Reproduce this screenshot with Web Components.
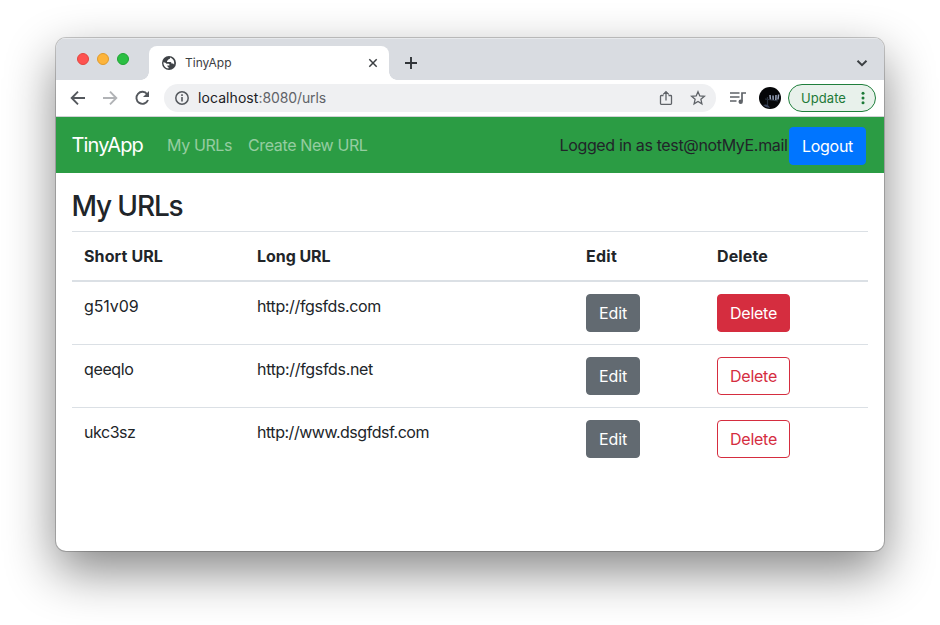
<!DOCTYPE html>
<html lang="en">
<head>
<meta charset="utf-8">
<title>TinyApp</title>
<style>
html,body{margin:0;height:100%;background:#fff;overflow:hidden}
body{font-family:Inter,"Liberation Sans",sans-serif;color:#212529;font-size:16px}
</style>
</head>
<body>
<browser-window>
  <tab-strip slot="chrome" label="TinyApp"></tab-strip>
  <tool-bar slot="chrome"></tool-bar>
  <nav-bar></nav-bar>
  <url-page></url-page>
</browser-window>
<script>
const define = (name, html, setup) => customElements.define(name, class extends HTMLElement {
  connectedCallback() {
    if (this.shadowRoot) return;
    const t = document.createElement('template');
    t.innerHTML = html;
    this.attachShadow({mode: 'open'}).append(t.content.cloneNode(true));
    if (setup) setup(this);
  }
});

/* A single line of text whose tracking is set so that it fills the width in "w". */
define('text-run', `<style>:host{display:inline-block;white-space:nowrap}span{display:inline-block}</style><span><slot></slot></span>`, el => {
  const w = parseFloat(el.getAttribute('w'));
  const n = el.textContent.length;
  const natural = el.shadowRoot.querySelector('span').getBoundingClientRect().width;
  el.style.letterSpacing = ((w - natural) / n).toFixed(3) + 'px';
});

define('app-button', `<style>
:host{display:inline-block}
button{font:inherit;display:block;box-sizing:border-box;height:38px;padding:0 12px;line-height:24px;border:1px solid #626a71;border-radius:4px;background:#626a71;color:#fff}
:host([kind=primary]) button{background:#0075ff;border-color:#0075ff}
:host([kind=danger]) button{background:#d52d3f;border-color:#d52d3f}
:host([kind=outline]) button{background:#fff;border-color:#d52d3f;color:#d52d3f}
</style><button><slot></slot></button>`);

define('browser-window', `<style>
:host{display:block;padding:38px 56px 74px;height:625px;box-sizing:border-box}
.frame{height:513px;background:#fff;border-radius:10px;box-shadow:0 0 0 1px rgba(0,0,0,.2),0 20px 50px rgba(0,0,0,.48)}
.clip{height:513px;border-radius:10px;overflow:hidden}
</style><div class="frame"><div class="clip"><slot name="chrome"></slot><slot></slot></div></div>`);

define('tab-strip', `<style>
:host{display:flex;height:42px;box-sizing:border-box;background:#d9dce1;padding:0 16px 0 21px;color:#3c4043;box-shadow:inset 0 1px #e7e9ec}
.lights{display:flex;gap:8px;padding-top:15px;width:72px}
.lights i{width:12px;height:12px;box-sizing:border-box;border-radius:50%;border:1px solid #e2463f;background:#fe5250}
.lights i:nth-child(2){background:#fdb43b;border-color:#e09b2b}
.lights i:nth-child(3){background:#2bbf43;border-color:#20a534}
.tab{position:relative;display:flex;align-items:center;width:240px;height:34px;margin-top:8px;box-sizing:border-box;padding:0 11px 0 13px;background:#fff;border-radius:8px 8px 0 0;font-size:12px}
.tab::before,.tab::after{content:"";position:absolute;bottom:0;width:8px;height:8px}
.tab::before{left:-8px;background:radial-gradient(circle at 0 0,transparent 7.5px,#fff 8px)}
.tab::after{right:-8px;background:radial-gradient(circle at 100% 0,transparent 7.5px,#fff 8px)}
.tab text-run{margin-left:9px;flex:1;padding-bottom:2px}
svg{display:block;flex:none}
.plus{margin:18px 0 0 15px}.down{margin:19px 0 0 auto}
</style>
<div class="lights"><i></i><i></i><i></i></div>
<div class="tab">
<svg width="14" height="14" viewBox="0 0 14 14"><circle cx="7" cy="7" r="7" fill="#3f4347"/><path d="M8 1.5c.2 1-.3 1.6-1.2 1.8-.9.1-.7 1.2-1.500 1.400-.7.3-.3 1.300.4 1.300h2.800c.8 0 1 .9.9 1.600h1c.8 0 1.300.6 1.700.9.6-2.800-.6-5.900-4.100-7zM1.400 6.300c-.2 3.300 2 6 5.100 6.300v-1.500c-.8-.1-1.200-.7-1.200-1.600h2c.5-.6.2-1.700-.7-1.700H4.500c-.6-.6-1.200-1.300-3.100-1.500z" fill="#fff"/></svg>
<text-run w="46.5">TinyApp</text-run>
<svg width="10" height="10" viewBox="0 0 10 10" stroke="#3c4043" stroke-width="1.5"><path d="M1.3 1.3l7.4 7.4M8.7 1.3L1.3 8.7"/></svg>
</div>
<svg class="plus" width="14" height="14" viewBox="0 0 14 14" stroke="#303438" stroke-width="1.9"><path d="M7 1v12M1 7h12"/></svg>
<svg class="down" width="12" height="12" viewBox="0 0 12 12" fill="none" stroke="#3c4043" stroke-width="2"><path d="M1.5 3.7L6 8.2l4.500-4.500"/></svg>`,
el => el.shadowRoot.querySelector('text-run').textContent = el.getAttribute('label'));

define('tool-bar', `<style>
:host{display:flex;align-items:center;box-sizing:border-box;height:37px;background:#fff;border-bottom:1px solid #d0d2d5;padding:0 8px 0 14px;color:#202124;font-size:14px}
svg{display:block;flex:none}
.box{display:flex;flex:none;align-items:center;width:552px;height:28px;border-radius:14px;background:#eff0f2;box-sizing:border-box;padding:0 10px 0 10px;margin-left:13px}
.box text-run{padding-bottom:2px}
.path{color:#5f6368;flex:1}
.avatar{margin:0 7px 0 13px}
.update{display:flex;align-items:center;justify-content:space-between;width:88px;height:28px;box-sizing:border-box;border:1px solid #1f7f3c;border-radius:14px;background:#e8f1eb;color:#1d7a38;padding:0 10.5px 0 12px;font-size:13px}
</style>
<svg width="16" height="16" viewBox="0 0 16 16" fill="none" stroke="#54585d" stroke-width="1.9"><path d="M15 8H2M8 1.700L1.700 8 8 14.300"/></svg>
<svg style="margin-left:16px" width="16" height="16" viewBox="0 0 16 16" fill="none" stroke="#b1b3b6" stroke-width="1.9"><path d="M1 8h13M8 1.700L14.300 8 8 14.300"/></svg>
<svg style="margin-left:16px" width="17" height="16" viewBox="0 0 17 16"><path d="M13.200 4.200A6 6 0 1 0 14 10" fill="none" stroke="#54585d" stroke-width="1.900"/><path d="M15 1v6H9z" fill="#54585d"/></svg>
<div class="box">
<svg style="margin:0 9px 0 1px" width="14" height="14" viewBox="0 0 14 14"><circle cx="7" cy="7" r="6.200" fill="none" stroke="#54585d" stroke-width="1.500"/><path d="M6.200 6h1.600v4.600H6.200zM6.200 3.300h1.600v1.600H6.200z" fill="#54585d"/></svg>
<text-run w="60.500">localhost</text-run><span class="path"><text-run w="67.500">:8080/urls</text-run></span>
<svg width="14" height="16" viewBox="0 0 14 16" fill="none" stroke="#5f6368" stroke-width="1.300"><path d="M4.500 5.500H2.200q-.7 0-.7.700v7.300q0 .8.7.8h9.600q.7 0 .7-.8V6.200q0-.7-.7-.7H9.500M7 10.500V1.800M4.200 4.400L7 1.600l2.800 2.800"/></svg>
<svg style="margin-left:17px" width="16" height="16" viewBox="0 0 16 16" fill="none" stroke="#5f6368" stroke-width="1.300"><path d="M8 1.700l1.800 4.200 4.600.4-3.500 3 1 4.500L8 11.400l-3.900 2.400 1-4.500-3.500-3 4.600-.4z"/></svg>
</div>
<svg style="margin-left:14px" width="16" height="14" viewBox="0 0 16 14" ><path d="M0 2h9.500M0 6h9.500M0 10h6.500" stroke="#5f6368" stroke-width="1.600"/><path d="M12 10V2h4" fill="none" stroke="#5f6368" stroke-width="1.700"/><circle cx="10.700" cy="10.700" r="2.200" fill="#5f6368"/></svg>
<svg class="avatar" width="22" height="22" viewBox="0 0 22 22"><circle cx="11" cy="11" r="11" fill="#050608"/><path d="M11 8l.5 5M14 8.500l.2 4.500M17 8l-.2 5.500M19.600 7.500l-.6 5" stroke="#9ba6bd" stroke-width="1.500"/><path d="M6 12l13 2M8.500 10v9" stroke="#2b3340" stroke-width="1.200"/><path d="M4 18q5-2 7 3-4 0-7-3z" fill="#39435a"/></svg>
<div class="update"><text-run w="45">Update</text-run>
<svg width="4" height="14" viewBox="0 0 4 14" fill="#1d7a38"><circle cx="2" cy="2.200" r="1.500"/><circle cx="2" cy="7" r="1.500"/><circle cx="2" cy="11.800" r="1.500"/></svg></div>`);

define('nav-bar', `<style>
:host{display:flex;align-items:center;height:56px;box-sizing:border-box;background:#2b9c44;padding:0 18px 0 15.5px;line-height:24px}
nav{display:flex;flex:1;gap:16px;margin-left:24px;color:rgba(255,255,255,.5)}
.brand{font-size:20px;color:#fff}
.user{margin-right:1.5px}
app-button{margin-top:2px}
</style>
<span class="brand"><text-run w="71.500">TinyApp</text-run></span>
<nav><text-run w="65">My URLs</text-run><text-run w="119.500">Create New URL</text-run></nav>
<span class="user"><text-run w="228">Logged in as test@notMyE.mail</text-run></span>
<app-button kind="primary"><text-run w="51">Logout</text-run></app-button>`);

define('url-row', `<style>
:host{display:grid;grid-template-columns:173px 329px 131px 163px;border-top:1px solid #dbe0e5;line-height:24px}
:host([first]){border-top:0}
:host([head]){font-weight:650;border-bottom:2px solid #dbe0e5}
::slotted(*){padding:12px}
</style><slot></slot>`);

define('url-page', `<style>
:host{display:block;padding:16px}
h3{margin:0 0 8px;font-size:28px;line-height:34px;font-weight:500}
h3 text-run{margin-left:-.5px}
</style>
<h3><text-run w="111">My URLs</text-run></h3>
<url-row head><div><text-run w="79">Short URL</text-run></div><div><text-run w="73.500">Long URL</text-run></div><div><text-run w="31">Edit</text-run></div><div><text-run w="51">Delete</text-run></div></url-row>
<url-row first><div><text-run w="54.500">g51v09</text-run></div><div><text-run w="124">http://fgsfds.com</text-run></div><div><app-button><text-run w="28">Edit</text-run></app-button></div><div><app-button kind="danger"><text-run w="47">Delete</text-run></app-button></div></url-row>
<url-row><div><text-run w="49.500">qeeqlo</text-run></div><div><text-run w="116">http://fgsfds.net</text-run></div><div><app-button><text-run w="28">Edit</text-run></app-button></div><div><app-button kind="outline"><text-run w="47">Delete</text-run></app-button></div></url-row>
<url-row><div><text-run w="51.500">ukc3sz</text-run></div><div><text-run w="172">http://www.dsgfdsf.com</text-run></div><div><app-button><text-run w="28">Edit</text-run></app-button></div><div><app-button kind="outline"><text-run w="47">Delete</text-run></app-button></div></url-row>`);
</script>
</body>
</html>
